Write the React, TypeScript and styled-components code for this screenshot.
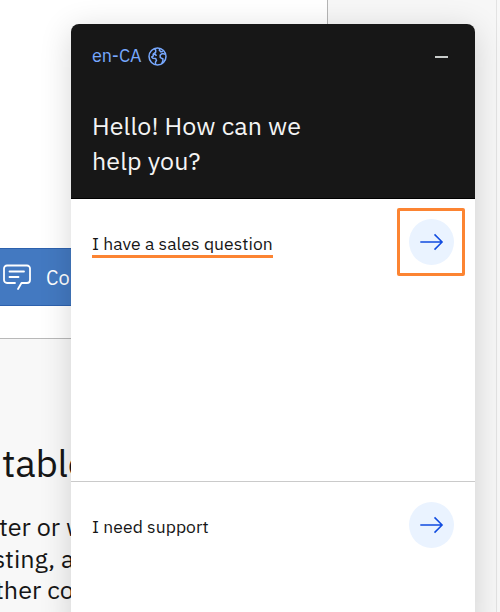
import React from "react";
import styled, { createGlobalStyle } from "styled-components";

const GlobalStyle = createGlobalStyle`
  * { box-sizing: border-box; }
  body { margin: 0; font-family: "IBM Plex Sans", Roboto, sans-serif; color: #161616; }
  p, h1, h2 { margin: 0; font-weight: 400; }
  button { border: 0; padding: 0; background: none; font: inherit; color: inherit; }
`;

const Screen = styled.div`
  position: relative;
  display: grid;
  grid-template-columns: 327px 170px 3px;
  width: 500px;
  height: 612px;
  overflow: hidden;
  background: #fff;
`;

const Main = styled.main`
  display: flex;
  flex-direction: column;
  overflow: hidden;
`;

const Hero = styled.section`
  display: flex;
  align-items: flex-end;
  height: 339px;
  flex: none;
  padding-bottom: 32px;
  border-bottom: 1px solid #b8b8b8;
`;

const ContactButton = styled.button`
  display: flex;
  align-items: center;
  gap: 15px;
  width: 210px;
  height: 58px;
  padding-left: 2px;
  border-top: 1px solid #2d61ad;
  border-bottom: 1px solid #2d61ad;
  background: #4379c1;
  color: #fff;
  font-size: 20px;
  letter-spacing: 0.1px;
`;

const Article = styled.section`
  flex: 1;
  padding-top: 99px;
  background: #f8f8f8;
  white-space: nowrap;
`;

const Heading = styled.h2`
  margin-left: 2px;
  font-size: 38.5px;
  line-height: 50px;
  letter-spacing: -0.3px;
`;

const Copy = styled.p<{ $offset: number }>`
  margin-left: ${(p) => p.$offset}px;
  font-size: 25.2px;
  line-height: 31.6px;
  &:first-of-type { margin-top: 23px; }
`;

const Side = styled.aside`
  border-left: 1px solid #b5b5b5;
  border-right: 1px solid #e3e3e3;
  background: #f7f7f7;
`;

const Gutter = styled.div`
  background: #f8f8f8;
`;

const Chat = styled.section`
  position: absolute;
  top: 24px;
  left: 71px;
  display: flex;
  flex-direction: column;
  width: 404px;
  height: 610px;
  overflow: hidden;
  border-radius: 8px;
  background: #fff;
  box-shadow: 0 6px 32px rgba(0, 0, 0, 0.16);
`;

const ChatHeader = styled.header`
  flex: none;
  height: 175px;
  padding: 20px 27px 0 21px;
  border-bottom: 1px solid #000;
  background: #171717;
  color: #f4f4f4;
`;

const Toolbar = styled.div`
  display: flex;
  align-items: center;
  justify-content: space-between;
  height: 24px;
`;

const Language = styled.button`
  display: flex;
  align-items: center;
  gap: 7px;
  color: #78a9ff;
  font-size: 18px;
  line-height: 24px;
  letter-spacing: -0.2px;
`;

const Minimize = styled.button`
  width: 13px;
  height: 2px;
  margin-top: 1px;
  background: #c8ccca;
`;

const Greeting = styled.h1`
  margin-top: 40px;
  font-size: 25px;
  line-height: 35px;
  letter-spacing: 0.1px;
`;

const Option = styled.div<{ $height: number; $top: number; $divided?: boolean }>`
  display: flex;
  flex: none;
  align-items: flex-start;
  justify-content: space-between;
  height: ${(p) => p.$height}px;
  padding: ${(p) => p.$top}px 10px 0 21px;
  border-bottom: ${(p) => (p.$divided ? "1px solid #cacaca" : "0")};
`;

const OptionLabel = styled.span<{ $marked?: boolean }>`
  display: block;
  height: 25px;
  margin-top: 25px;
  border-bottom: ${(p) => (p.$marked ? "3px solid #fc8432" : "0")};
  font-size: 17.5px;
  line-height: 21px;
  letter-spacing: 0.07px;
  white-space: nowrap;
`;

const ArrowFrame = styled.div<{ $marked?: boolean }>`
  display: grid;
  place-items: center;
  width: 68px;
  height: 68px;
  border: 3px solid ${(p) => (p.$marked ? "#fc8432" : "transparent")};
  border-radius: 2px;
`;

const ArrowButton = styled.button`
  display: grid;
  place-items: center;
  width: 45px;
  height: 46px;
  margin-left: 1px;
  border-radius: 50%;
  background: #eaf3ff;
`;

const Arrow = () => (
  <ArrowButton aria-label="Select">
    <svg width="24" height="18" viewBox="0 0 24 18" fill="none" stroke="#104be0" strokeWidth="1.5">
      <path d="M.3 9H22M14.5 1.4 22.1 9 14.5 16.6" />
    </svg>
  </ArrowButton>
);

const Globe = () => (
  <svg width="19" height="19" viewBox="0 0 19 19" fill="none" stroke="#78a9ff" strokeWidth="1.5" strokeLinejoin="round">
    <circle cx="9.5" cy="9.5" r="8.5" />
    <path d="M6.3 1.7 7.7 3v2.2L5.2 7v2.1L3.7 10l1.2 1.3 2.8.2.8 2-1 1.4v3" />
    <path d="M5.2 7.7 7.2 7l1.2 1.8" />
    <path d="m12.2 1.5-.9 1.7 1.7 1.7 1.9-.8M17.4 7.2l-3.2-.7-2 1.6v2.2l1.7 1.2 1 .2v2.2l-1.2 3" />
  </svg>
);

const ChatIcon = () => (
  <svg width="29" height="28" viewBox="0 0 29 28" fill="none" stroke="#fff" strokeWidth="1.8" strokeLinecap="round" strokeLinejoin="round">
    <path d="M13 20H5a3 3 0 0 1-3-3V5.5a3 3 0 0 1 3-3h20a3 3 0 0 1 3 3V17a3 3 0 0 1-3 3h-5.5L16 26M7.5 8.5H22M7.5 14h9" />
  </svg>
);

export default function App() {
  return (
    <>
      <GlobalStyle />
      <Screen>
        <Main>
          <Hero>
            <ContactButton><ChatIcon />Contact us</ContactButton>
          </Hero>
          <Article>
            <Heading>table</Heading>
            <Copy $offset={-1}>ter or w</Copy>
            <Copy $offset={-7}>sting, a</Copy>
            <Copy $offset={-5}>ther co</Copy>
          </Article>
        </Main>
        <Side />
        <Gutter />
        <Chat>
          <ChatHeader>
            <Toolbar>
              <Language>en-CA <Globe /></Language>
              <Minimize aria-label="Minimize" />
            </Toolbar>
            <Greeting>Hello! How can we<br />help you?</Greeting>
          </ChatHeader>
          <Option $height={283} $top={9} $divided>
            <OptionLabel $marked>I have a sales question</OptionLabel>
            <ArrowFrame $marked><Arrow /></ArrowFrame>
          </Option>
          <Option $height={152} $top={9}>
            <OptionLabel>I need support</OptionLabel>
            <ArrowFrame><Arrow /></ArrowFrame>
          </Option>
        </Chat>
      </Screen>
    </>
  );
}
